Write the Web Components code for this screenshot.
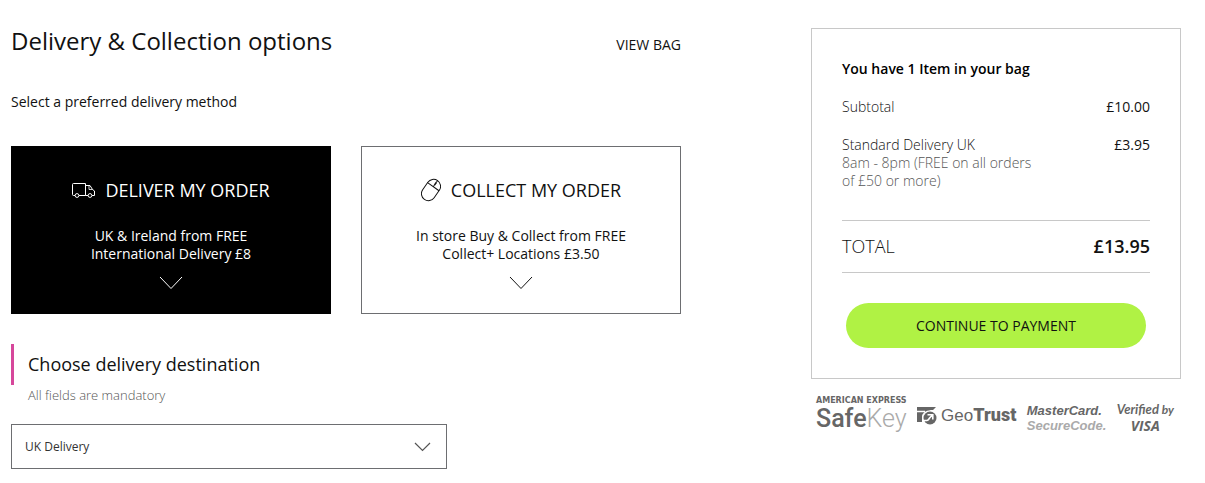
<!DOCTYPE html>
<html lang="en">
<head>
<meta charset="utf-8">
<meta name="viewport" content="width=device-width, initial-scale=1">
<title>Delivery &amp; Collection options</title>
<style>
  body {
    margin: 0;
    background: #fff;
    color: #111;
    font-family: "Open Sans", "Noto Sans", sans-serif;
    font-size: 14px;
    line-height: 18px;
  }
</style>
</head>
<body>
<checkout-page>
  <delivery-header slot="main" href="#bag">
    Delivery &amp; Collection options
    <span slot="link">VIEW BAG</span>
  </delivery-header>
  <method-list slot="main">
    <span slot="intro">Select a preferred delivery method</span>
    <method-card selected>
      <svg slot="icon" width="23" height="16" viewBox="0 0 23 16" fill="none" stroke="currentColor" aria-hidden="true">
        <path d="M3 13.500H1.500a1 1 0 0 1-1-1v-10a1 1 0 0 1 1-1H13.500v12H7M13.500 3.500h4.500l2.500 4 2 1.500v4.500H20M13.500 13.500H16"/>
        <path stroke-width=".8" d="M17 4v3.500h3.500"/>
        <circle cx="5" cy="13.500" r="1.900"/><circle cx="18" cy="13.500" r="1.900"/>
      </svg>
      <span slot="title">DELIVER MY ORDER</span>
      UK &amp; Ireland from FREE<br>International Delivery £8
    </method-card>
    <method-card>
      <svg slot="icon" width="20" height="24" viewBox="0 0 20 24" fill="none" stroke="currentColor" aria-hidden="true">
        <g transform="rotate(35 10 12)">
          <rect x="3" y=".5" width="14" height="23" rx="7"/>
          <path d="M3 8h14M10 .5v2M10 6v2"/><path d="M10 2.500v3.500" stroke-width="1.600"/>
        </g>
      </svg>
      <span slot="title">COLLECT MY ORDER</span>
      In store Buy &amp; Collect from FREE<br>Collect+ Locations £3.50
    </method-card>
  </method-list>
  <destination-picker slot="main"></destination-picker>

  <order-summary slot="side">
    <span slot="heading">You have 1 Item in your bag</span>
    <summary-row>Subtotal<span slot="price">£10.00</span></summary-row>
    <summary-row>Standard Delivery UK
      <span slot="note">8am - 8pm (FREE on all orders of £50 or more)</span>
      <span slot="price">£3.95</span>
    </summary-row>
    <summary-row total slot="total">TOTAL<span slot="price">£13.95</span></summary-row>
  </order-summary>
  <trust-badges slot="side"></trust-badges>
</checkout-page>

<script>
const define = (name, html) => customElements.define(name, class extends HTMLElement {
  constructor() {
    super();
    const template = document.createElement('template');
    template.innerHTML = html;
    this.attachShadow({ mode: 'open' }).append(template.content.cloneNode(true));
  }
  connectedCallback() {
    const link = this.shadowRoot.querySelector('a');
    if (link && this.hasAttribute('href')) link.href = this.getAttribute('href');
    const toggle = this.shadowRoot.querySelector('button[aria-pressed]');
    if (toggle) toggle.setAttribute('aria-pressed', this.hasAttribute('selected'));
  }
});

define('checkout-page', `
  <style>
    :host { display: grid; grid-template-columns: minmax(0, 1fr) minmax(0, 370px); column-gap: 130px; align-items: start; padding: 24px 24px 14px 11px; }
    aside { padding-top: 4px; }
    @media (max-width: 1000px) { :host { column-gap: 30px; } }
    @media (max-width: 760px) { :host { grid-template-columns: minmax(0, 1fr); } }
  </style>
  <main><slot name="main"></slot></main>
  <aside><slot name="side"></slot></aside>
`);

define('delivery-header', `
  <style>
    :host { display: flex; justify-content: space-between; align-items: baseline; }
    h1 { margin: 0; font-size: 24px; line-height: 34px; font-weight: 400; }
    a { color: inherit; text-decoration: none; }
  </style>
  <h1><slot></slot></h1>
  <a href="#"><slot name="link"></slot></a>
`);

define('method-list', `
  <style>
    :host { display: block; margin-top: 35px; }
    p { margin: 0 0 35px; }
    div { display: grid; grid-template-columns: 1fr 1fr; gap: 30px; }
  </style>
  <p><slot name="intro"></slot></p>
  <div><slot></slot></div>
`);

define('method-card', `
  <style>
    :host { display: block; }
    button { display: flex; flex-direction: column; align-items: center; width: 100%; padding: 30px 10px 23px; border: 1px solid #6d6e71; background: #fff; color: #111; font: inherit; cursor: pointer; }
    :host([selected]) button { background: #000; border-color: #000; color: #fff; }
    .title { display: flex; align-items: center; gap: 10px; font-size: 18px; line-height: 26px; margin-bottom: 24px; }
    .arrow { margin-top: 13px; }
  </style>
  <button type="button" aria-pressed="false">
    <span class="title"><slot name="icon"></slot><slot name="title"></slot></span>
    <span><slot></slot></span>
    <svg class="arrow" width="24" height="14" viewBox="0 0 24 14" fill="none" stroke="currentColor" aria-hidden="true"><path d="M1 1l11 11.500L23 1"/></svg>
  </button>
`);

define('destination-picker', `
  <style>
    :host { display: block; margin-top: 30px; }
    h2 { margin: 0; border-left: 3px solid #d6479b; padding-left: 14px; font-size: 18px; line-height: 41px; font-weight: 400; }
    p { margin: 0 0 19px 17px; font-size: 13px; line-height: 20px; font-weight: 300; color: #555; }
    .field { display: grid; align-items: center; max-width: 436px; }
    select { grid-area: 1 / 1; appearance: none; width: 100%; height: 45px; padding: 0 40px 0 13px; border: 1px solid #6d6e71; border-radius: 0; background: #fff; color: #333; font: inherit; font-size: 12px; }
    svg { grid-area: 1 / 1; justify-self: end; margin-right: 16px; color: #555; pointer-events: none; }
  </style>
  <h2><label for="destination">Choose delivery destination</label></h2>
  <p>All fields are mandatory</p>
  <div class="field">
    <select id="destination"><option>UK Delivery</option></select>
    <svg width="17" height="10" viewBox="0 0 17 10" fill="none" stroke="currentColor" stroke-width="1.200" aria-hidden="true"><path d="M1 1l7.500 7.500L16 1"/></svg>
  </div>
`);

define('order-summary', `
  <style>
    :host { display: block; border: 1px solid #c8c8c8; padding: 31px 30px 30px; }
    h2 { margin: 0; font-size: 14px; line-height: 18px; font-weight: 600; color: #000; }
    .total { margin: 30px 0; border: solid #c8c8c8; border-width: 1px 0; padding: 12px 0 13px; }
    .action { padding: 0 4px; }
    button { display: block; width: 100%; height: 45px; border: 0; border-radius: 24px; background: #b0f244; color: #111; font: inherit; cursor: pointer; }
  </style>
  <h2><slot name="heading"></slot></h2>
  <slot></slot>
  <div class="total"><slot name="total"></slot></div>
  <div class="action"><button type="button">CONTINUE TO PAYMENT</button></div>
`);

define('summary-row', `
  <style>
    :host { display: flex; justify-content: space-between; margin-top: 20px; }
    .label { font-weight: 300; max-width: 200px; }
    .note { display: block; color: #555; }
    :host([total]) { margin-top: 0; font-size: 18px; line-height: 26px; }
    :host([total]) .price { font-weight: 600; }
  </style>
  <div class="label"><slot></slot><span class="note"><slot name="note"></slot></span></div>
  <div class="price"><slot name="price"></slot></div>
`);

define('trust-badges', `
  <style>
    :host { display: flex; align-items: flex-start; justify-content: space-between; padding: 18px 7px 0 5px; color: #666; white-space: nowrap; }
    .safekey { font: 500 25px/28px Roboto, sans-serif; }
    .safekey small { display: block; font: bold 8px/8px "DejaVu Sans", sans-serif; }
    .pale { color: #aaa; }
    .safekey .pale { font-weight: 300; }
    .geotrust { display: flex; align-items: center; gap: 4px; padding-top: 6px; font: 17px/24px "Liberation Sans", sans-serif; }
    .geotrust b { font: 900 18px/24px Roboto, sans-serif; }
    .card { padding-top: 6px; font: italic bold 13px/15px "Liberation Sans", sans-serif; }
    .card span, .visa span { display: block; }
    .visa { padding-top: 4px; font: italic 700 13px/16px Lato, sans-serif; text-align: center; }
    .visa small { font-size: 12px; }
    .visa .name { font: italic bold 14px/16px "Open Sans", sans-serif; }
  </style>
  <div class="safekey"><small>AMERICAN EXPRESS</small>Safe<span class="pale">Key</span></div>
  <div class="geotrust">
    <svg width="20" height="18" viewBox="0 0 20 18" aria-hidden="true">
      <path fill="#666" d="M0 0h19l-3 3C10 3 6 5 5 9v6H0z"/>
      <circle cx="13" cy="11" r="6.500" fill="#666"/>
      <path fill="none" stroke="#fff" stroke-width="1.600" d="M0 4.500h8M6 13.500h4c1.500 0 2-2 3-3l2.500-2.500M10.500 7.700h5.300v4.800"/>
    </svg>
    <span>Geo<b>Trust</b></span>
  </div>
  <div class="card"><span>MasterCard.</span><span class="pale">SecureCode.</span></div>
  <div class="visa"><span>Verified <small>by</small></span><span class="name">VISA</span></div>
`);
</script>
</body>
</html>
